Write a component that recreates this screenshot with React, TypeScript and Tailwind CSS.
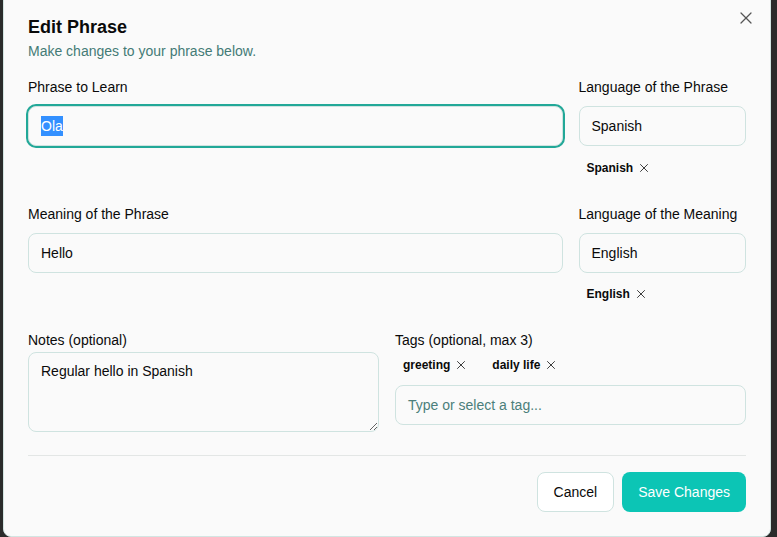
import { X } from 'lucide-react';

function Chip({ label }: { label: string }) {
  return (
    <span className="inline-flex items-center px-2 py-1 text-xs font-bold leading-4 text-[#0a0a0a]">
      {label}
      <X className="ml-1 h-[14px] w-[14px] text-[#222]" strokeWidth={1.5} />
    </span>
  );
}

function Field({ children }: { children: React.ReactNode }) {
  return (
    <div className="flex h-10 items-center rounded-lg border border-[#cfe3e0] bg-[#fafafa] px-3 text-sm text-[#0a0a0a]">
      {children}
    </div>
  );
}

export default function App() {
  return (
    <div
      className="h-[537px] w-[777px] overflow-hidden bg-[#2b2b2b] pl-[3px]"
      style={{ fontFamily: '"Liberation Sans", Arial, sans-serif' }}
    >
      <div className="relative -mt-3 w-[768px] rounded-lg border border-[#d3e5e2] bg-[#fafafa] p-6">
        {/* close */}
        <button className="absolute right-[14px] top-[19px] text-[#555]">
          <X className="h-5 w-5" strokeWidth={1.5} />
        </button>

        {/* header */}
        <h2 className="text-lg font-bold leading-7 text-[#0a0a0a]">Edit Phrase</h2>
        <p className="text-sm leading-5 text-[#447a76]">Make changes to your phrase below.</p>

        <div className="mt-4 space-y-6">
          {/* phrase */}
          <div className="grid grid-cols-4 gap-4">
            <div className="col-span-3">
              <label className="mb-[9px] block text-sm leading-5 text-[#0a0a0a]">Phrase to Learn</label>
              <div className="flex h-10 items-center rounded-lg border border-[#cfe3e0] bg-[#fafafa] px-3 text-sm text-[#0a0a0a] shadow-[0_1px_2px_rgba(0,0,0,0.08)] ring-2 ring-[#22a898]">
                <span className="bg-[#3390ff] text-white">Ola</span>
              </div>
            </div>
            <div>
              <label className="mb-[9px] block text-sm leading-5 text-[#0a0a0a]">Language of the Phrase</label>
              <Field>Spanish</Field>
              <div className="mt-2.5 flex gap-2">
                <Chip label="Spanish" />
              </div>
            </div>
          </div>

          {/* meaning */}
          <div className="grid grid-cols-4 gap-4">
            <div className="col-span-3">
              <label className="mb-[9px] block text-sm leading-5 text-[#0a0a0a]">Meaning of the Phrase</label>
              <Field>Hello</Field>
            </div>
            <div>
              <label className="mb-[9px] block text-sm leading-5 text-[#0a0a0a]">Language of the Meaning</label>
              <Field>English</Field>
              <div className="mt-[9px] flex gap-2">
                <Chip label="English" />
              </div>
            </div>
          </div>

          {/* notes + tags */}
          <div className="grid grid-cols-2 items-start gap-4">
            <div>
              <label className="mb-0.5 block text-sm leading-5 text-[#0a0a0a]">Notes (optional)</label>
              <textarea
                readOnly
                defaultValue="Regular hello in Spanish"
                className="block h-20 w-full rounded-lg border border-[#cfe3e0] bg-[#fafafa] px-3 py-2 text-sm text-[#0a0a0a] outline-none"
                style={{ fontFamily: '"Liberation Sans", Arial, sans-serif' }}
              />
            </div>
            <div>
              <label className="mb-[3px] block text-sm leading-5 text-[#0a0a0a]">Tags (optional, max 3)</label>
              <div className="mb-2 flex gap-2">
                <Chip label="greeting" />
                <Chip label="daily life" />
              </div>
              <Field>
                <span className="text-[#4b7f7b]">Type or select a tag...</span>
              </Field>
            </div>
          </div>
        </div>

        <div className="mt-[23px] border-t border-[#e3e6e5] pt-4">
          <div className="flex justify-end gap-2">
            <button className="h-10 rounded-lg border border-[#cfe3e0] bg-white px-4 text-sm text-[#0a0a0a]">
              Cancel
            </button>
            <button className="h-10 rounded-lg bg-[#0cc5b5] px-4 text-sm text-white">Save Changes</button>
          </div>
        </div>
      </div>
    </div>
  );
}
